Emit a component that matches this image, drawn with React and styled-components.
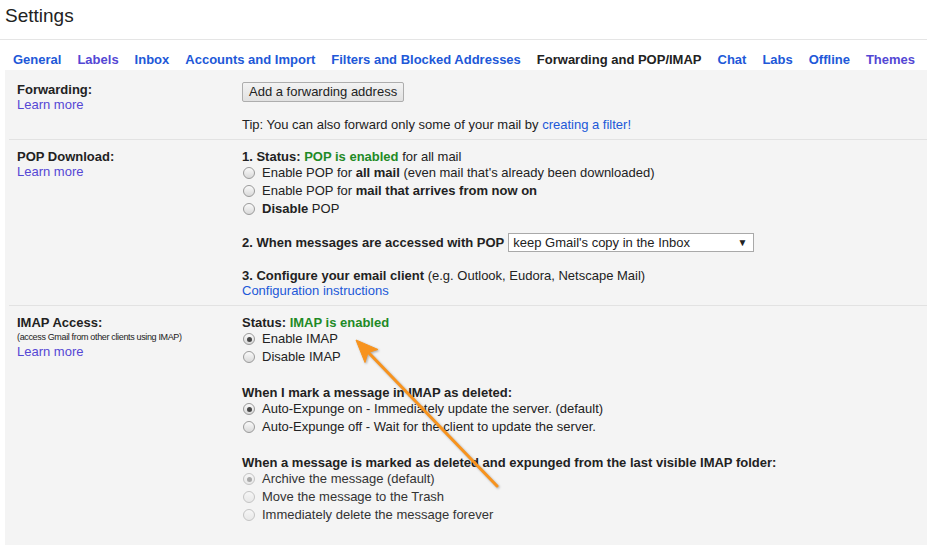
import React from "react";
import styled, { createGlobalStyle, css } from "styled-components";

const Global = createGlobalStyle`
  html, body { margin: 0; padding: 0; background: #fff; }
  body {
    font-family: "Liberation Sans", Arial, sans-serif;
    font-size: 13px;
    color: #222;
  }
  * { box-sizing: border-box; }
`;

const BLUE = "#2158d8";
const VISITED = "#5447d4";
const GREEN = "#1f8a26";

const Page = styled.div`
  position: relative;
  width: 927px;
  height: 545px;
  overflow: hidden;
  display: flex;
  flex-direction: column;
`;

const Header = styled.div`
  height: 40px;
  padding: 5px 0 0 5px;
  font-size: 19px;
  line-height: 22px;
  color: #222;
  border-bottom: 1px solid #e5e5e5;
`;

const Tabs = styled.nav`
  display: flex;
  margin-top: 9px;
  padding-left: 5px;
  height: 21px;
`;

const Tab = styled.a`
  display: block;
  padding: 0 8px;
  line-height: 21px;
  font-weight: bold;
  font-size: 13px;
  text-decoration: none;
  white-space: nowrap;
  color: ${(p) => (p.$visited ? VISITED : BLUE)};
  ${(p) =>
    p.$active &&
    css`
      background: #fff;
      color: #222;
    `}
`;

const Panel = styled.div`
  flex: 1;
  margin-left: 5px;
  background: #f4f4f4;
  padding-top: 1px;
`;

const Section = styled.section`
  display: grid;
  grid-template-columns: 225px 1fr;
  margin-left: 4px;
  padding: ${(p) => p.$pad || "8px 0 7px 8px"};
  border-bottom: ${(p) => (p.$last ? "none" : "1px solid #e2e2e2")};
`;

const LabelCol = styled.div`
  display: flex;
  flex-direction: column;
`;

const LabelTitle = styled.div`
  font-weight: bold;
  line-height: 15px;
`;

const SmallNote = styled.div`
  font-size: 9px;
  line-height: 14px;
  letter-spacing: -0.35px;
  color: #222;
`;

const Link = styled.a`
  color: ${(p) => (p.$visited ? VISITED : BLUE)};
  text-decoration: none;
  line-height: 15px;
  cursor: pointer;
`;

const Content = styled.div`
  display: flex;
  flex-direction: column;
  align-items: flex-start;
`;

const Line = styled.div`
  line-height: 15px;
  margin-top: ${(p) => p.$mt || 0}px;
  white-space: nowrap;
`;

const B = styled.b`
  font-weight: bold;
`;

const Green = styled.b`
  font-weight: bold;
  color: ${GREEN};
`;

const Button = styled.button`
  height: 20px;
  padding: 0 6px;
  font-family: inherit;
  font-size: 13px;
  color: #222;
  background: linear-gradient(#f3f3f3, #e1e1e1);
  border: 1px solid #adadad;
  border-radius: 2px;
  line-height: 18px;
`;

const RadioRow = styled.label`
  display: flex;
  align-items: center;
  height: 18px;
  line-height: 18px;
  white-space: nowrap;
  color: ${(p) => (p.$disabled ? "#333" : "#222")};
`;

const RadioDot = styled.span`
  flex: none;
  position: relative;
  width: 12px;
  height: 12px;
  margin: 0 7px 0 1px;
  border-radius: 50%;
  border: 1px solid ${(p) => (p.$disabled ? "#c4c4c4" : "#9a9a9a")};
  background: ${(p) =>
    p.$disabled
      ? "linear-gradient(#f6f6f6, #e8e8e8)"
      : "linear-gradient(#fafafa, #d9d9d9)"};
  &::after {
    content: "";
    display: ${(p) => (p.$checked ? "block" : "none")};
    position: absolute;
    left: 2.5px;
    top: 2.5px;
    width: 5px;
    height: 5px;
    border-radius: 50%;
    background: ${(p) => (p.$disabled ? "#a8a8a8" : "#474747")};
  }
`;

const SelectRow = styled.div`
  display: flex;
  align-items: center;
  margin-top: 15px;
  white-space: nowrap;
  line-height: 15px;
`;

const FakeSelect = styled.div`
  display: flex;
  align-items: center;
  justify-content: space-between;
  width: 246px;
  height: 19px;
  margin-left: 4px;
  padding: 0 6px 0 4px;
  background: #fff;
  border: 1px solid #a9a9a9;
  font-size: 13px;
  color: #222;
`;

const Caret = styled.span`
  font-size: 10px;
  line-height: 10px;
  color: #222;
`;

const Group = styled.div`
  display: flex;
  flex-direction: column;
  margin-top: ${(p) => p.$mt || 0}px;
`;

const ArrowLayer = styled.svg`
  position: absolute;
  left: 0;
  top: 0;
  pointer-events: none;
  filter: drop-shadow(1px 1px 1px rgba(0, 0, 0, 0.3));
`;

function Radio({ checked, disabled, children }) {
  return (
    <RadioRow $disabled={disabled}>
      <RadioDot $checked={checked} $disabled={disabled} />
      <span>{children}</span>
    </RadioRow>
  );
}

const tabs = [
  { t: "General" },
  { t: "Labels", v: true },
  { t: "Inbox" },
  { t: "Accounts and Import" },
  { t: "Filters and Blocked Addresses" },
  { t: "Forwarding and POP/IMAP", active: true },
  { t: "Chat" },
  { t: "Labs" },
  { t: "Offline" },
  { t: "Themes", v: true },
];

export default function App() {
  return (
    <>
      <Global />
      <Page>
        <Header>Settings</Header>
        <Tabs>
          {tabs.map((x) => (
            <Tab key={x.t} $visited={x.v} $active={x.active}>
              {x.t}
            </Tab>
          ))}
        </Tabs>
        <Panel>
          <Section $pad="11px 0 7px 8px">
            <LabelCol>
              <LabelTitle>Forwarding:</LabelTitle>
              <Link $visited>Learn more</Link>
            </LabelCol>
            <Content>
              <Button>Add a forwarding address</Button>
              <Line $mt={15}>
                Tip: You can also forward only some of your mail by{" "}
                <Link>creating a filter!</Link>
              </Line>
            </Content>
          </Section>

          <Section $pad="9px 0 7px 8px">
            <LabelCol>
              <LabelTitle>POP Download:</LabelTitle>
              <Link $visited>Learn more</Link>
            </LabelCol>
            <Content>
              <Line>
                <B>1. Status: </B>
                <Green>POP is enabled</Green> for all mail
              </Line>
              <Radio>
                Enable POP for <B>all mail</B> (even mail that's already been
                downloaded)
              </Radio>
              <Radio>
                Enable POP for <B>mail that arrives from now on</B>
              </Radio>
              <Radio>
                <B>Disable</B> POP
              </Radio>
              <SelectRow>
                <B>2. When messages are accessed with POP</B>
                <FakeSelect>
                  <span>keep Gmail's copy in the Inbox</span>
                  <Caret>▼</Caret>
                </FakeSelect>
              </SelectRow>
              <Line $mt={16}>
                <B>3. Configure your email client</B> (e.g. Outlook, Eudora,
                Netscape Mail)
              </Line>
              <Line>
                <Link>Configuration instructions</Link>
              </Line>
            </Content>
          </Section>

          <Section $pad="9px 0 0 8px" $last>
            <LabelCol>
              <LabelTitle>IMAP Access:</LabelTitle>
              <SmallNote>(access Gmail from other clients using IMAP)</SmallNote>
              <Link $visited>Learn more</Link>
            </LabelCol>
            <Content>
              <Line>
                <B>Status: </B>
                <Green>IMAP is enabled</Green>
              </Line>
              <Radio checked>Enable IMAP</Radio>
              <Radio>Disable IMAP</Radio>
              <Group $mt={19}>
                <Line>
                  <B>When I mark a message in IMAP as deleted:</B>
                </Line>
                <Radio checked>
                  Auto-Expunge on - Immediately update the server. (default)
                </Radio>
                <Radio>
                  Auto-Expunge off - Wait for the client to update the server.
                </Radio>
              </Group>
              <Group $mt={19}>
                <Line>
                  <B>
                    When a message is marked as deleted and expunged from the
                    last visible IMAP folder:
                  </B>
                </Line>
                <Radio checked disabled>
                  Archive the message (default)
                </Radio>
                <Radio disabled>Move the message to the Trash</Radio>
                <Radio disabled>Immediately delete the message forever</Radio>
              </Group>
            </Content>
          </Section>
        </Panel>
        <ArrowLayer width="927" height="545" viewBox="0 0 927 545">
          <line
            x1="497"
            y1="486"
            x2="367"
            y2="351"
            stroke="#f7931e"
            strokeWidth="3"
            strokeLinecap="round"
          />
          <polygon
            points="356,340 378,349.5 368,352.5 365,362.5"
            fill="#f7931e"
            stroke="#f7931e"
            strokeWidth="1"
            strokeLinejoin="round"
          />
        </ArrowLayer>
      </Page>
    </>
  );
}
